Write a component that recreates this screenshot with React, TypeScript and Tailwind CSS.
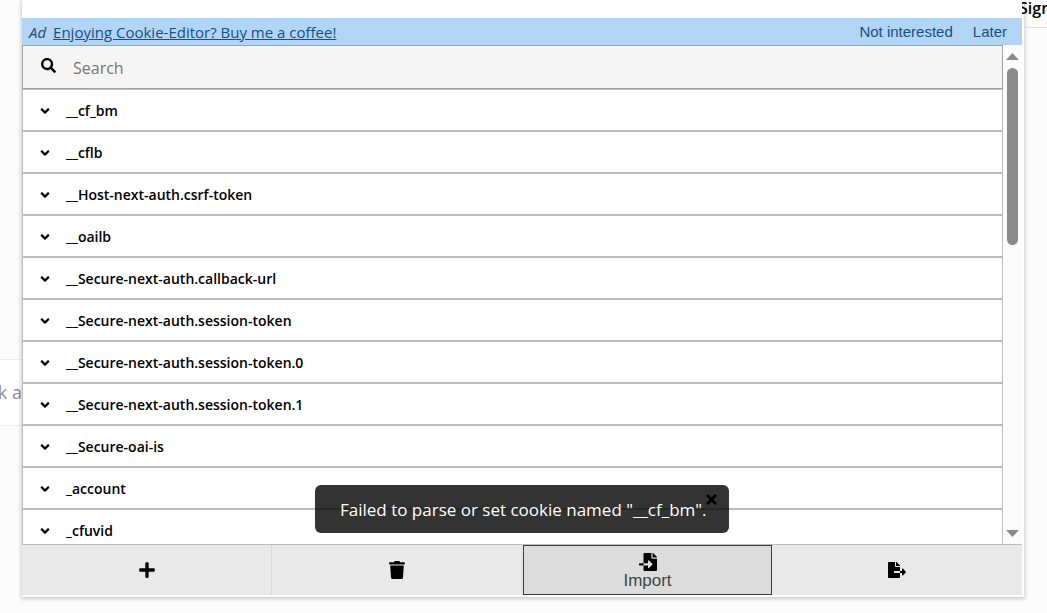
import {
  FaAngleDown,
  FaFileExport,
  FaFileImport,
  FaPlus,
  FaSearch,
  FaTimes,
  FaTrash,
} from "react-icons/fa";

const cookies = [
  "__cf_bm",
  "__cflb",
  "__Host-next-auth.csrf-token",
  "__oailb",
  "__Secure-next-auth.callback-url",
  "__Secure-next-auth.session-token",
  "__Secure-next-auth.session-token.0",
  "__Secure-next-auth.session-token.1",
  "__Secure-oai-is",
  "_account",
  "_cfuvid",
];

function AdBar() {
  return (
    <div className="flex h-[27px] shrink-0 items-center bg-[#b0d5f7] pr-[15px] pl-[7px] text-[15px] leading-5 text-[#1b4f80]">
      <span className="mr-[7px] text-[#2d4a66] italic">Ad</span>
      <a href="#coffee" className="underline">
        Enjoying Cookie-Editor? Buy me a coffee!
      </a>
      <div className="ml-auto flex gap-5 font-['Liberation_Sans',Arial,sans-serif]">
        <button type="button">Not interested</button>
        <button type="button">Later</button>
      </div>
    </div>
  );
}

function SearchBar() {
  return (
    <label className="flex h-11 items-center border border-[#a3a3a3] bg-[#f5f5f5] pt-0.5 pl-[18px]">
      <FaSearch className="mb-1.5 size-[15px] shrink-0" />
      <input
        type="text"
        aria-label="Search"
        placeholder="Search"
        className="ml-[17px] min-w-0 flex-1 bg-transparent text-base outline-none placeholder:text-[#757575]"
      />
    </label>
  );
}

function CookieRow({ name }: { name: string }) {
  return (
    <li>
      <button
        type="button"
        className="flex h-[42px] w-full items-center border border-[#bdbdbd] bg-white pt-0.5 pl-[15px] text-left text-sm font-semibold"
      >
        <FaAngleDown className="size-[14px] shrink-0" />
        <span className="ml-[14px]">{name}</span>
      </button>
    </li>
  );
}

function Scrollbar() {
  return (
    <div className="flex w-[19px] shrink-0 flex-col items-center bg-[#fcfcfc] pt-2 pb-[7px]">
      <svg width="13" height="7" viewBox="0 0 13 7" fill="#8a8a8a">
        <path d="M6.5 0 13 7H0z" />
      </svg>
      <div className="mt-2 h-[177px] w-[11px] rounded-full bg-[#8a8a8a]" />
      <svg className="mt-auto" width="13" height="7" viewBox="0 0 13 7" fill="#8a8a8a">
        <path d="M0 0h13L6.5 7z" />
      </svg>
    </div>
  );
}

function Toast() {
  return (
    <div
      role="alert"
      className="absolute bottom-[11px] left-1/2 flex h-12 w-[414px] -translate-x-1/2 items-center rounded-md bg-black/80 pt-0.5 pl-[25px] text-[17px] whitespace-nowrap text-white"
    >
      Failed to parse or set cookie named "__cf_bm".
      <button
        type="button"
        aria-label="Close"
        className="absolute top-[7px] right-[10px] text-black"
      >
        <FaTimes className="size-[15px]" />
      </button>
    </div>
  );
}

function Footer() {
  return (
    <div className="grid h-[51px] shrink-0 grid-cols-4 border-t border-[#bdbdbd] bg-[#e9e9e9] text-lg">
      <button
        type="button"
        aria-label="Add"
        className="flex items-center justify-center border-r border-[#d8d8d8]"
      >
        <FaPlus />
      </button>
      <button
        type="button"
        aria-label="Delete all"
        className="flex items-center justify-center border-r border-[#dedede]"
      >
        <FaTrash />
      </button>
      <button
        type="button"
        className="ml-px flex flex-col items-center justify-center border border-[#3c3c3c] bg-[#dcdcdc] pt-1"
      >
        <FaFileImport />
        <span className="font-['Liberation_Sans',Arial,sans-serif] text-[17px] leading-5 text-[#444]">
          Import
        </span>
      </button>
      <button
        type="button"
        aria-label="Export"
        className="flex items-center justify-center"
      >
        <FaFileExport />
      </button>
    </div>
  );
}

export default function App() {
  return (
    <div className="flex h-screen overflow-hidden bg-[#fcfcfc] font-['Open_Sans','Noto_Sans',sans-serif] text-black">
      <div className="flex w-[22px] shrink-0 flex-col justify-center overflow-hidden pt-[171px]">
        <div className="flex h-[67px] items-center justify-end border-y border-[#eee] bg-white text-lg whitespace-nowrap text-[#8e8e8e]">
          k a
        </div>
      </div>

      <main className="mb-[18px] flex min-w-0 flex-1 flex-col bg-white pt-[18px] shadow-[1px_1px_0_1px_#ffffff,1px_2px_4px_2px_rgba(0,0,0,0.2)]">
        <AdBar />
        <div className="relative flex min-h-0 flex-1">
          <div className="min-w-0 flex-1 overflow-hidden">
            <SearchBar />
            <ul>
              {cookies.map((name) => (
                <CookieRow key={name} name={name} />
              ))}
            </ul>
          </div>
          <Scrollbar />
          <Toast />
        </div>
        <Footer />
      </main>

      <div className="relative w-[25px] shrink-0 overflow-hidden pl-[3px]">
        <div className="h-7 border-b border-[#dcdcdc]">
          <span className="-ml-[6px] block text-base leading-4 font-semibold">Sign</span>
        </div>
      </div>
    </div>
  );
}
